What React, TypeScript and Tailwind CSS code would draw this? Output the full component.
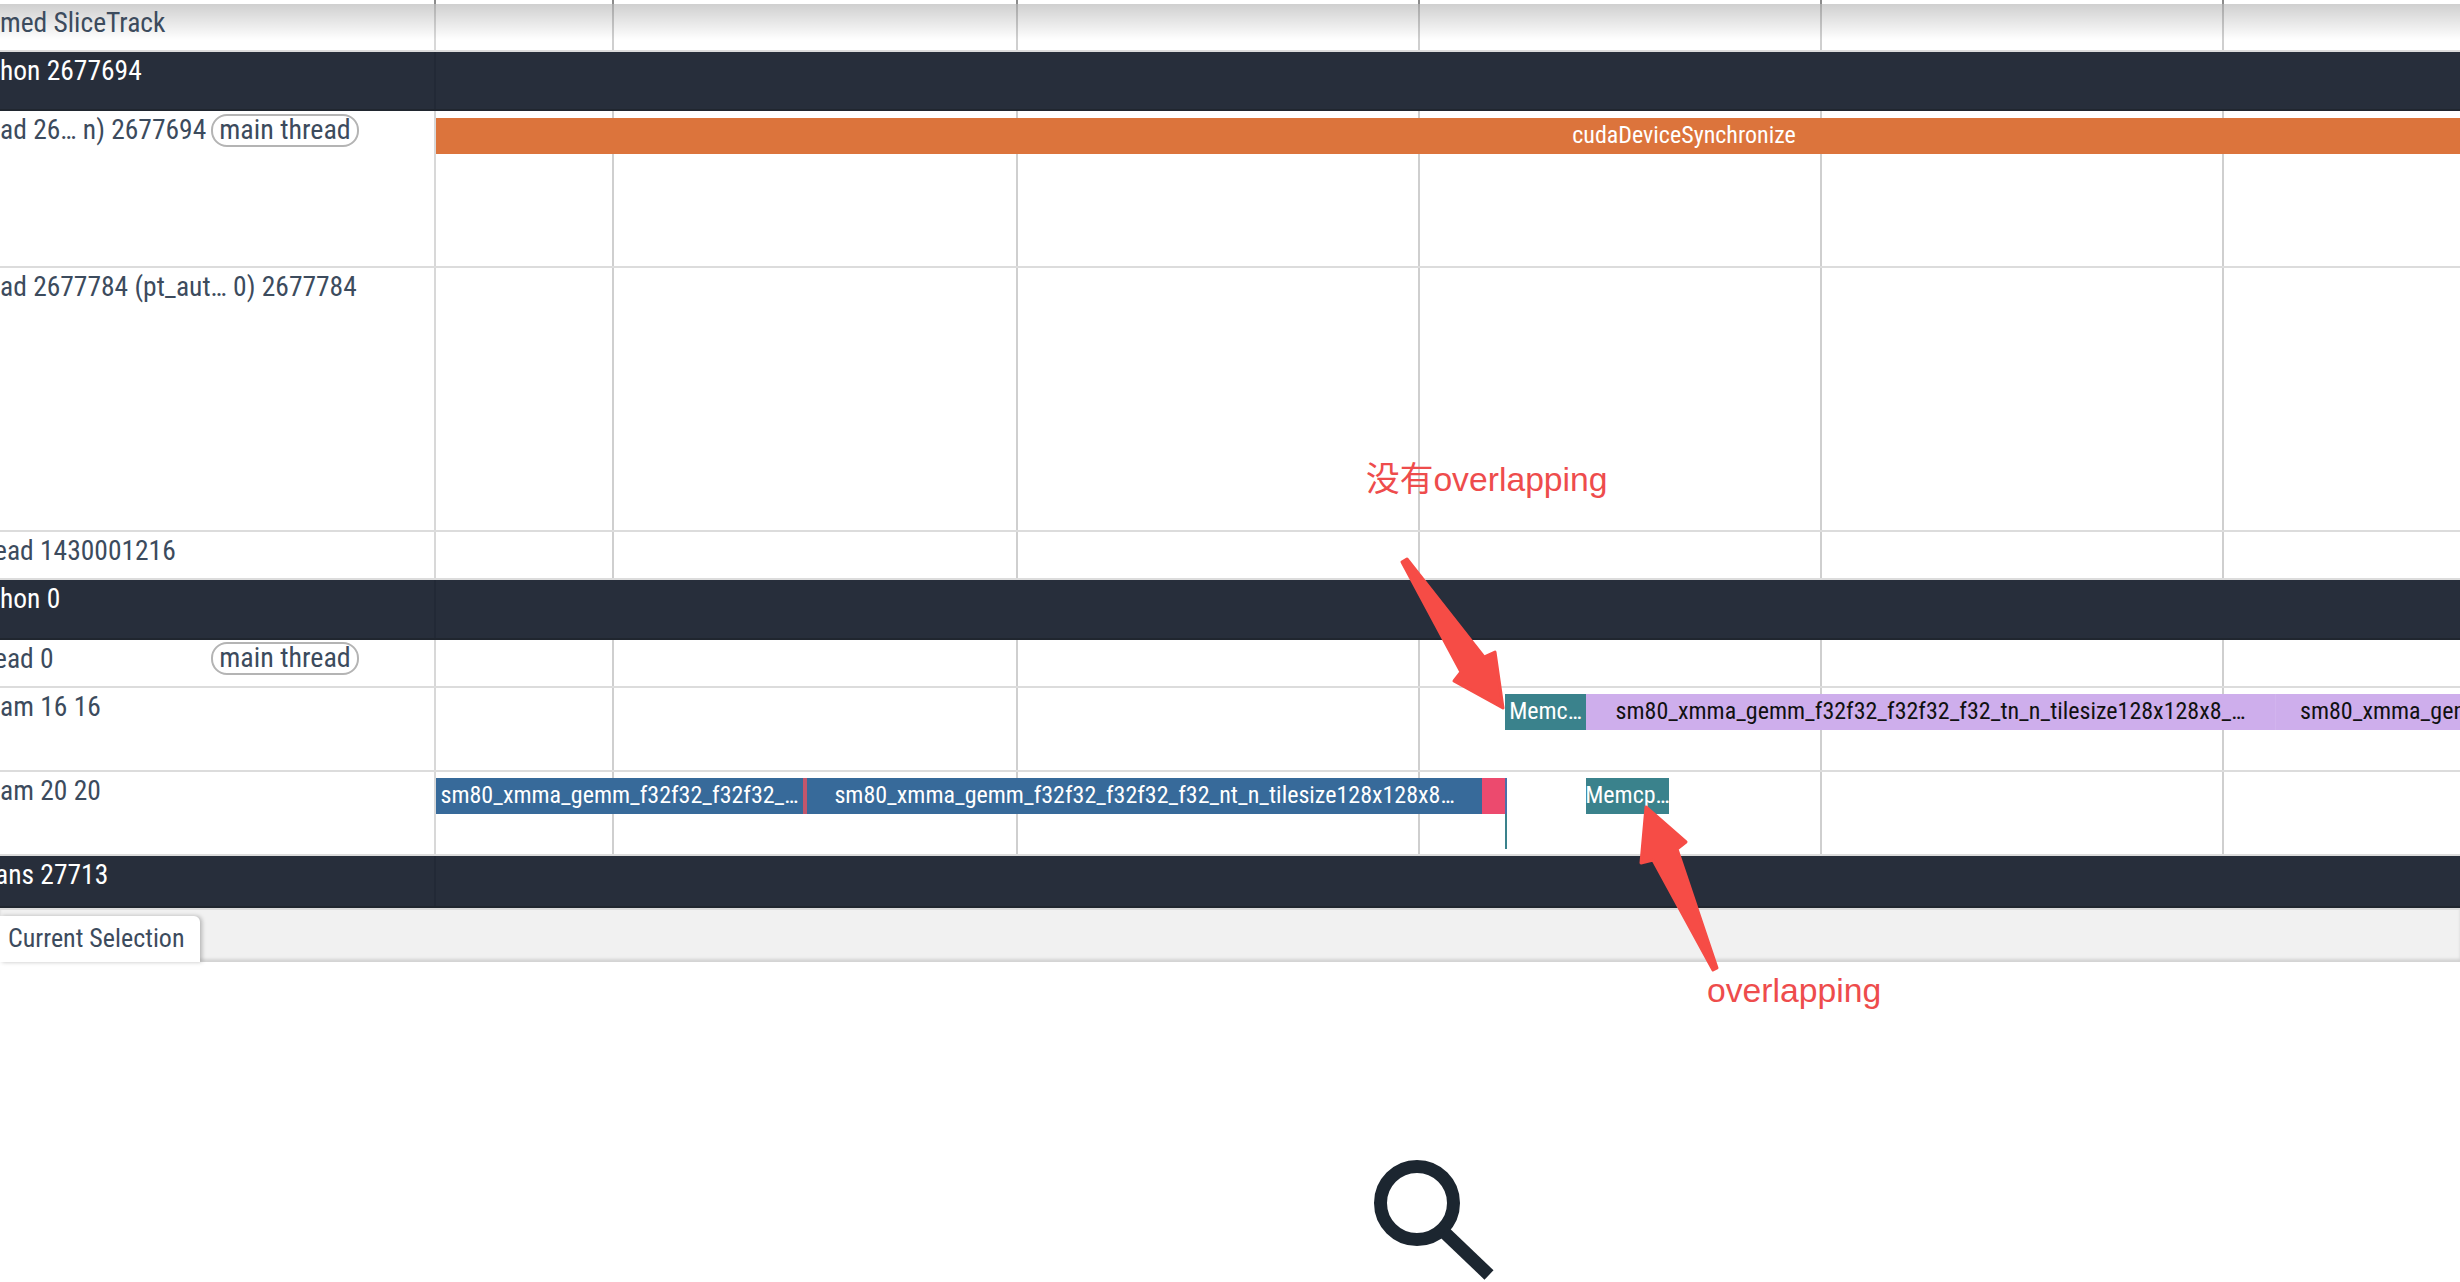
import type { ReactNode } from "react";

const SLICE_TEXT = "sm80_xmma_gemm_f32f32_f32f32_f32_tn_n_tilesize128x128x8_…";

function GridLines({ stub }: { stub?: boolean }) {
  const first = stub ? "border-l-2 border-[#8c8c8c]" : "border-l-2 border-[#d8d8d8]";
  const rest = stub ? "border-l-2 border-[#8c8c8c]" : "border-l-2 border-[#cfcfcf]";
  return (
    <div className="absolute inset-0 grid grid-cols-[178px_404px_repeat(4,402px)]">
      <div className={first} />
      <div className={rest} />
      <div className={rest} />
      <div className={rest} />
      <div className={rest} />
      <div className={rest} />
    </div>
  );
}

function Pill({ className }: { className: string }) {
  return (
    <span
      className={`flex h-[33px] w-[148px] shrink-0 items-center justify-center rounded-[16px] border-2 border-[#b4b4b4] pb-[2px] text-[28px] leading-none text-[#3c4b5d] ${className}`}
    >
      main thread
    </span>
  );
}

function Group({ label, h, offset = "" }: { label: string; h: string; offset?: string }) {
  return (
    <div className={`flex border-b-2 border-[#20262f] bg-[#272e3b] ${h}`}>
      <div className="w-[434px] overflow-hidden pt-[4px] text-[27.5px] leading-[30px] text-white">
        <div className={offset}>{label}</div>
      </div>
      <div className="flex-1 border-l-2 border-[#222936]" />
    </div>
  );
}

function Track({
  label,
  h,
  pill,
  offset = "",
  pt = "pt-[6px]",
  children,
}: {
  label: string;
  h: string;
  pill?: string;
  offset?: string;
  pt?: string;
  children?: ReactNode;
}) {
  return (
    <div className={`flex border-b-2 border-[#dcdcdc] bg-white ${h}`}>
      <div className="flex w-[434px] items-start overflow-hidden whitespace-nowrap pt-[3px] text-[27.5px] leading-[30px] text-[#3c4b5d]">
        <span className={`mt-px w-[211px] shrink-0 ${offset}`}>{label}</span>
        {pill && <Pill className={pill} />}
      </div>
      <div className="relative flex-1 overflow-hidden">
        <GridLines />
        <div className={`relative flex items-start pl-0.5 ${pt}`}>{children}</div>
      </div>
    </div>
  );
}

function Slice({ className, children }: { className: string; children?: ReactNode }) {
  return (
    <div
      className={`flex h-9 shrink-0 items-center justify-center overflow-hidden whitespace-nowrap pb-[2px] text-[24px] leading-none ${className}`}
    >
      {children}
    </div>
  );
}

function Arrows() {
  return (
    <svg className="absolute left-0 top-0" width="2460" height="1282" viewBox="0 0 2460 1282">
      <g fill="#f64c46" stroke="#f64c46" strokeWidth="3" strokeLinejoin="round">
        <path d="M1402 562 L1407 559 L1484 657 L1495 652 L1503 708 L1454 681 L1461 672 Z" />
        <path d="M1646 807 L1686 842 L1677 849 L1717 968 L1713 970 L1653 860 L1641 863 Z" />
      </g>
    </svg>
  );
}

export default function App() {
  return (
    <div className="relative h-[1282px] w-[2460px] overflow-hidden bg-white font-['Roboto_Condensed','Roboto',sans-serif] font-stretch-[75%]">
      <div className="relative flex h-[52px] border-b-2 border-[#dcdcdc]">
        <div className="relative z-10 w-[434px] pt-[8px] text-[27.5px] leading-[30px] text-[#3c4b5d]">med SliceTrack</div>
        <div className="relative flex-1">
          <GridLines />
        </div>
        <div className="absolute inset-x-0 top-0 h-1 bg-white" />
        <div className="absolute left-[434px] right-0 top-0 h-1">
          <GridLines stub />
        </div>
        <div className="absolute inset-x-0 top-[4px] h-9 bg-gradient-to-b from-[#00000030] to-transparent" />
      </div>

      <Group label="hon 2677694" h="h-[59px]" />
      <Track label="ad 26… n) 2677694" h="h-[157px]" pill="mt-0" pt="pt-[7px]">
        <Slice className="w-[2496px] bg-[#dc743c] text-white">cudaDeviceSynchronize</Slice>
      </Track>
      <Track label="ad 2677784 (pt_aut… 0) 2677784" h="h-[264px]" />
      <Track label="ead 1430001216" h="h-[48px]" offset="-ml-[6px]" />

      <Group label="hon 0" h="h-[60px]" />
      <Track label="ead 0" h="h-[48px]" pill="-mt-px ml-[6px]" offset="-ml-[6px]" />
      <Track label="am 16 16" h="h-[84px]">
        <Slice className="ml-[1069px] w-[81px] bg-[#3a828c] text-white">Memc…</Slice>
        <Slice className="w-[690px] border-r border-[#d2b4ee] bg-[#ceaeec] text-[#111]">{SLICE_TEXT}</Slice>
        <Slice className="w-[400px] justify-start bg-[#ceaeec] pl-[24px] text-[#111]">{SLICE_TEXT}</Slice>
      </Track>
      <Track label="am 20 20" h="h-[84px]">
        <Slice className="w-[367px] bg-[#376a9a] text-white">sm80_xmma_gemm_f32f32_f32f32_…</Slice>
        <div className="h-9 w-1 shrink-0 bg-[#c2566c]" />
        <Slice className="w-[675px] bg-[#376a9a] text-white">
          sm80_xmma_gemm_f32f32_f32f32_f32_nt_n_tilesize128x128x8…
        </Slice>
        <div className="h-9 w-[23px] shrink-0 bg-[#ec4a6e]" />
        <div className="flex w-0.5 shrink-0 flex-col">
          <div className="h-9 bg-[#4a6fa8]" />
          <div className="h-[35px] bg-[#3a828c]" />
        </div>
        <Slice className="ml-[79px] w-[83px] bg-[#3a828c] text-white">Memcp…</Slice>
      </Track>

      <Group label="ans 27713" h="h-[52px]" offset="-ml-[5px]" />

      <div className="flex h-[54px] items-end border-t-2 border-[#dcdcdc] bg-[#f1f1f1] shadow-[inset_0_-3px_3px_#00000020]">
        <div className="flex h-[46px] w-[200px] items-center rounded-tr-[6px] bg-white pb-[2px] pl-2 text-[26px] leading-none text-[#3c4b5d] shadow-[2px_0_4px_#00000040]">
          Current Selection
        </div>
      </div>

      <div className="pl-[1370px] pt-[193px]">
        <svg width="130" height="127" viewBox="0 0 130 127" fill="none" stroke="#1c2630" strokeWidth="13">
          <circle cx="47" cy="48" r="36.5" />
          <path d="M74 77 L119 120" />
        </svg>
      </div>

      <Arrows />

      <div className="absolute left-[1366px] top-[459px] font-['Liberation_Sans','Noto_Sans_CJK_SC',sans-serif] text-[33.7px] leading-10 text-[#ee4c4c]">
        没有overlapping
      </div>
      <div className="absolute left-[1707px] top-[970px] font-['Liberation_Sans',sans-serif] text-[33.7px] leading-10 text-[#ee4c4c]">
        overlapping
      </div>
    </div>
  );
}
